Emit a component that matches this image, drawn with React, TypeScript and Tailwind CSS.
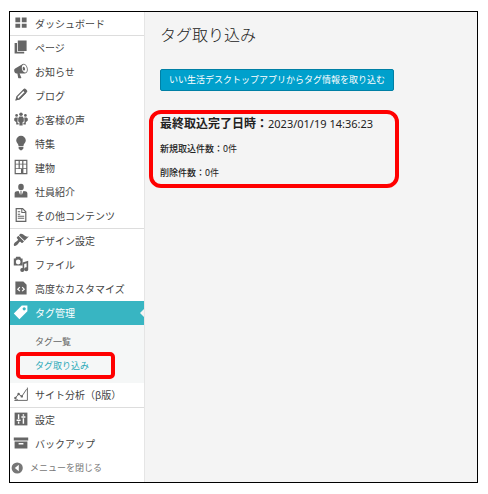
import React from 'react'

type IconProps = { children: React.ReactNode }

const Icon = ({ children }: IconProps) => (
  <svg viewBox="0 0 20 20" className="w-4 h-4 shrink-0" fill="currentColor" aria-hidden="true">
    {children}
  </svg>
)

const line = { fill: 'none', stroke: 'currentColor', strokeWidth: 2 }

const icons = {
  dashboard: <path d="M3 3h6v6H3zM11 3h6v6h-6zM3 11h6v5H3zM11 11h6v5h-6z" />,
  pages: <path d="M6 15V2h11v13H6zm-1 1h9v2H2V5h3v11z" />,
  megaphone: (
    <path d="M18.15 5.94c.46 1.62.38 3.22-.02 4.48-.42 1.28-1.26 2.18-2.3 2.48-.16.06-.26.06-.4.06-.06.02-.12.02-.18.02-.06.02-.14.02-.22.02h-6.8l2.22 5.5c.02.14-.06.26-.14.34-.08.1-.24.16-.34.16H6.95c-.1 0-.26-.06-.34-.16-.08-.08-.16-.2-.14-.34l-1-5.5H4.25l-.02-.02c-.5.06-1.08-.18-1.54-.62s-.88-1.08-1.06-1.88c-.24-.8-.2-1.56-.02-2.2.18-.62.58-1.08 1.06-1.3l.02-.02 9-5.4c.1-.06.18-.1.24-.16.06-.04.14-.08.24-.12.16-.08.28-.12.5-.18 1.04-.3 2.24.1 3.22.98s1.84 2.24 2.26 3.86zm-2.58 5.98h-.02c.4-.1.74-.34 1.04-.7.58-.7.86-1.76.86-3.04 0-.64-.1-1.3-.28-1.98-.34-1.36-1.02-2.5-1.78-3.24s-1.68-1.1-2.46-.88c-.82.22-1.4.96-1.7 2-.32 1.04-.28 2.36.06 3.72.38 1.36 1 2.5 1.8 3.24.78.74 1.62 1.1 2.48.88zm-2.54-7.08c.22-.04.42-.02.62.04.38.16.76.48 1.02 1s.42 1.2.42 1.78c0 .3-.04.56-.12.8-.18.48-.44.84-.86.94-.34.1-.8-.06-1.14-.4s-.64-.86-.78-1.5c-.18-.62-.12-1.24.02-1.72s.48-.84.82-.94z" />
  ),
  pencil: (
    <>
      <path d="M4 16l1-4 8-8 3 3-8 8z" {...line} strokeWidth={1.5} />
      <path d="M7 14l8-8 1.500 1.500-8 8zM3 17l1.500-5 3.500 3.500zM12 4l2-2c1-.5 4 2 4 3.500l-2 2z" />
    </>
  ),
  people: (
    <>
      <circle cx="10" cy="4" r="2.2" />
      <circle cx="4.500" cy="5.500" r="1.700" />
      <circle cx="15.500" cy="5.500" r="1.700" />
      <path d="M8 7h4l1.500 2v4L12 14v4H8v-4l-1.500-1V9zM3 8h3l-.5 6.500L7 15v2H4v-3l-2.500-2V9.500zM17 8h-3l.5 6.500L13 15v2h3v-3l2.500-2V9.500z" />
    </>
  ),
  bulb: <path d="M10 1a6 6 0 0 1 6 6c0 3-3 4-3 7H7c0-3-3-4-3-7a6 6 0 0 1 6-6zM7 15h6v2l-2 2H9l-2-2z" />,
  building: (
    <path fillRule="evenodd" d="M2 1h16v18H2zM3.500 2.500V6H7V2.500zM8.500 2.500V6h3V2.500zM13 2.500V6h3.500V2.500zM3.500 7v4.500H7V7zM8.500 7v4.500h3V7zM13 7v4.500h3.500V7zM3.500 12.500v5H10v-5zM13 12.500v5h3.500v-5z" />
  ),
  person: (
    <path d="M10 1a3.500 4 0 1 1 0 8 3.500 4 0 0 1 0-8zM2 18v-5c0-2 2-3 5-3l2 5 .5-3-.5-1 1-1 1 1-.5 1 .5 3 2-5c3 0 5 1 5 3v5z" />
  ),
  document: (
    <>
      <path d="M4 2h8l4 4v12H4z" {...line} strokeWidth={1.5} />
      <path d="M11 2v5h5M6 6h3M6 9h3M6 11.500h8M6 14h8" {...line} strokeWidth={1.3} />
    </>
  ),
  brush: (
    <path d="M14.48 11.06L7.41 3.99l1.5-1.5c.5-.56 2.3-.47 3.51.32 1.21.8 1.43 1.28 2.91 2.1 1.18.64 2.45 1.26 4.45.85zm-.71.71L6.7 4.7 4.93 6.47c-.39.39-.39 1.02 0 1.41l1.06 1.06c.39.39.39 1.03 0 1.42-.6.6-1.43 1.11-2.21 1.69-.35.26-.7.53-1.01.84C1.43 14.23.4 16.08 1.4 17.07c.99 1 2.84-.03 4.18-1.36.31-.31.58-.66.85-1.02.57-.78 1.08-1.61 1.69-2.21.39-.39 1.02-.39 1.41 0l1.06 1.06c.39.39 1.02.39 1.41 0z" />
  ),
  media: (
    <>
      <path fillRule="evenodd" d="M1 3h2l1-2h5l1 2h2v9H1zM6.500 4.500a3 3 0 1 0 0 6 3 3 0 0 0 0-6z" />
      <path d="M12 8l7-2v10a2.500 2.500 0 1 1-2-2V9l-3 1v7a2.500 2.500 0 1 1-2-2z" />
    </>
  ),
  code: (
    <>
      <path d="M3 2h10l4 4v12H3z" />
      <path d="M8.500 9L6 11.500 8.500 14M11.500 9l2.500 2.500-2.500 2.500" fill="none" stroke="#fff" strokeWidth="1.5" />
    </>
  ),
  tag: <path fillRule="evenodd" d="M11 2h7v7L8 19l-7-7zm3 6c1.100 0 2-.9 2-2s-.9-2-2-2-2 .9-2 2 .9 2 2 2z" />,
  analytics: (
    <>
      <path d="M2 18h16V2M3 15l4-5 4 3 6-9M2 18l4-1" {...line} strokeWidth={1.2} />
      <circle cx="3" cy="15" r="1.500" />
      <circle cx="7" cy="10" r="1.500" />
      <circle cx="11" cy="13" r="1.500" />
    </>
  ),
  settings: (
    <>
      <path d="M2 2h16v16H2z" />
      <path d="M7 4v6M7 13v3M4.500 11.500h5M13 9v7M13 4v2M10.500 7.500h5" fill="none" stroke="#fff" strokeWidth="1.8" />
    </>
  ),
  backup: <path fillRule="evenodd" d="M1 3h18v4H1zM2 8h16v9H2zM7 10v2h6v-2z" />,
  collapse: <path fillRule="evenodd" d="M9 3a7 7 0 1 1 0 14A7 7 0 0 1 9 3zM11 6l-5 4 5 4z" />,
}

type Item = { label: string; icon: keyof typeof icons }

const contents: Item[] = [
  { label: 'ページ', icon: 'pages' },
  { label: 'お知らせ', icon: 'megaphone' },
  { label: 'ブログ', icon: 'pencil' },
  { label: 'お客様の声', icon: 'people' },
  { label: '特集', icon: 'bulb' },
  { label: '建物', icon: 'building' },
  { label: '社員紹介', icon: 'person' },
  { label: 'その他コンテンツ', icon: 'document' },
]

const design: Item[] = [
  { label: 'デザイン設定', icon: 'brush' },
  { label: 'ファイル', icon: 'media' },
  { label: '高度なカスタマイズ', icon: 'code' },
]

const system: Item[] = [
  { label: '設定', icon: 'settings' },
  { label: 'バックアップ', icon: 'backup' },
]

const MenuItem = ({ label, icon }: Item) => (
  <li>
    <a href="#" className="flex h-6 items-center gap-[6px] pb-[2px] pl-[3px] text-[10px] text-[#444]">
      <span className="flex text-[#666]"><Icon>{icons[icon]}</Icon></span>
      {label}
    </a>
  </li>
)

const Sidebar = () => {
  return (
    <nav className="w-[135px] shrink-0 border-r border-[#e5e5e5] bg-white whitespace-nowrap">
      <ul className="h-6 border-b border-[#ddd]">
        <MenuItem label="ダッシュボード" icon="dashboard" />
      </ul>
      <ul className="border-b border-[#ddd]">
        {contents.map((item) => <MenuItem key={item.label} {...item} />)}
      </ul>
      <ul className="border-b border-[#ddd]">
        {design.map((item) => <MenuItem key={item.label} {...item} />)}
        <li>
          <a href="#" className="relative flex h-6 items-center gap-[6px] bg-[#38b5c2] pb-[2px] pl-[3px] text-[10px] text-white">
            <Icon>{icons.tag}</Icon>
            タグ管理
            <span className="absolute right-0 top-2 border-y-4 border-r-4 border-y-transparent border-r-[#f4f4f4]" />
          </a>
          <ul className="bg-[#f5f7f7] py-[5px] text-[9px]">
            <li>
              <a href="#" className="flex h-6 items-center pl-[25px] text-[#666]">タグ一覧</a>
            </li>
            <li className="relative">
              <a href="#" className="flex h-6 items-center pl-[25px] text-[#2ba9b7]">タグ取り込み</a>
              <span className="pointer-events-none absolute -top-[2px] left-[6px] h-[27px] w-[99px] rounded-[5px] border-4 border-[#f00]" />
            </li>
          </ul>
        </li>
        <MenuItem label="サイト分析（β版）" icon="analytics" />
      </ul>
      <ul>
        {system.map((item) => <MenuItem key={item.label} {...item} />)}
      </ul>
      <button type="button" className="flex h-6 items-center gap-1 text-[9px] text-[#777]">
        <Icon>{icons.collapse}</Icon>
        メニューを閉じる
      </button>
    </nav>
  )
}

const App = () => {
  return (
    <div className="flex min-h-screen bg-white pt-[11px] pr-[10px] pb-[11px] pl-[9px] font-['Noto_Sans_CJK_JP',sans-serif]">
      <div className="flex w-full border border-black bg-[#f4f4f4]">
        <Sidebar />
        <main className="min-w-0 flex-1 pt-[10px] pl-[4px] text-[#222]">
          <h1 className="pl-[11px] text-[16px] leading-6 font-light text-[#222]">タグ取り込み</h1>
          <div className="pt-[22px] pl-[11px] leading-none">
            <button type="button" className="h-[22px] rounded-[2px] border border-[#0080a5] bg-[#00a0cc] px-2 text-[9px] leading-5 whitespace-nowrap text-white">
              いい生活デスクトップアプリからタグ情報を取り込む
            </button>
          </div>
          <section className="mt-[19px] w-[250px] rounded-[12px] border-4 border-[#f00] pb-[3px] pl-[7px]">
            <h2 className="text-[12px] leading-[18px] font-normal">
              <b>最終取込完了日時：</b>
              <span className="font-['Noto_Sans'] text-[11px]">2023/01/19 14:36:23</span>
            </h2>
            <p className="mt-2 text-[9px] leading-4"><span className="font-medium">新規取込件数：</span>0件</p>
            <p className="mt-2 text-[9px] leading-4"><span className="font-medium">削除件数：</span>0件</p>
          </section>
        </main>
      </div>
    </div>
  )
}

export default App
